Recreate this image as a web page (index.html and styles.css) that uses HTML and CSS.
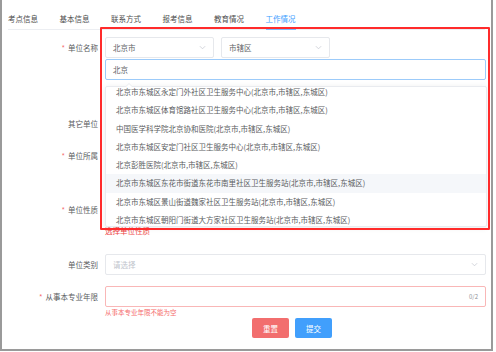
FILE: index.html
```html
<!doctype html>
<html>
<head>
    <meta charset="utf-8">
    <title>工作情况</title>
    <link rel="stylesheet" href="styles.css">
</head>
<body>
    <div class="window">
        <ul class="tabs">
            <li>考点信息</li>
            <li>基本信息</li>
            <li>联系方式</li>
            <li>报考信息</li>
            <li>教育情况</li>
            <li class="active">工作情况</li>
        </ul>

        <form class="form">
            <div class="form-item gap-lg">
                <label class="form-label required">单位名称</label>
                <div class="form-control">
                    <div class="select-row">
                        <div class="select">
                            <span>北京市</span>
                            <svg class="arrow" viewBox="0 0 8 5"><path d="M1 1l3 3 3-3" /></svg>
                        </div>
                        <div class="select">
                            <span>市辖区</span>
                            <svg class="arrow" viewBox="0 0 8 5"><path d="M1 1l3 3 3-3" /></svg>
                        </div>
                    </div>
                    <div class="input focused">北京</div>
                </div>
            </div>

            <div class="form-item gap-sm">
                <label class="form-label">其它单位</label>
                <div class="form-control"><div class="input"></div></div>
            </div>

            <div class="form-item gap-lg">
                <label class="form-label required">单位所属</label>
                <div class="form-control"><div class="input"></div></div>
            </div>

            <div class="form-item gap-md">
                <label class="form-label required">单位性质</label>
                <div class="form-control">
                    <div class="input"></div>
                    <div class="hint-error">选择单位性质</div>
                </div>
            </div>

            <div class="form-item gap-sm">
                <label class="form-label">单位类别</label>
                <div class="form-control">
                    <div class="select">
                        <span class="placeholder">请选择</span>
                        <svg class="arrow" viewBox="0 0 8 5"><path d="M1 1l3 3 3-3" /></svg>
                    </div>
                </div>
            </div>

            <div class="form-item gap-sm">
                <label class="form-label required">从事本专业年限</label>
                <div class="form-control">
                    <div class="input invalid">
                        <span></span>
                        <span class="count">0/2</span>
                    </div>
                    <div class="error">从事本专业年限不能为空</div>
                </div>
            </div>

            <div class="form-item">
                <div class="form-label"></div>
                <div class="form-control actions">
                    <button type="button" class="btn btn-danger">重置</button>
                    <button type="button" class="btn btn-primary">提交</button>
                </div>
            </div>
        </form>

        <div class="dropdown">
            <span class="dropdown-arrow"></span>
            <ul class="dropdown-list">
                <li>北京市东城区永定门外社区卫生服务中心(北京市,市辖区,东城区)</li>
                <li>北京市东城区体育馆路社区卫生服务中心(北京市,市辖区,东城区)</li>
                <li>中国医学科学院北京协和医院(北京市,市辖区,东城区)</li>
                <li>北京市东城区安定门社区卫生服务中心(北京市,市辖区,东城区)</li>
                <li>北京彭胜医院(北京市,市辖区,东城区)</li>
                <li class="hover">北京市东城区东花市街道东花市南里社区卫生服务站(北京市,市辖区,东城区)</li>
                <li>北京市东城区景山街道魏家社区卫生服务站(北京市,市辖区,东城区)</li>
                <li>北京市东城区朝阳门街道大方家社区卫生服务站(北京市,市辖区,东城区)</li>
            </ul>
        </div>

        <div class="highlight"></div>
    </div>
</body>
</html>
```

FILE: styles.css
```css
:root {
    --primary: #409eff;
    --danger: #f56c6c;
    --border: #e6e8ec;
    --text: #606266;
}

html, body {
    margin: 0;
    background: #fff;
}

.window {
    position: relative;
    width: 489px;
    height: 349px;
    border-left: 2px solid #9a9a9a;
    border-right: 2px solid #9a9a9a;
    border-bottom: 2px solid #9a9a9a;
    font-family: "Noto Sans CJK SC", "Noto Sans", sans-serif;
    font-size: 7.5px;
    color: var(--text);
    overflow: hidden;
}

/* tabs */
.tabs {
    display: flex;
    gap: 21.5px;
    margin: 0 6px;
    padding: 0;
    list-style: none;
    height: 30px;
    box-sizing: border-box;
    border-bottom: 1px solid #eceef2;
}
.tabs li {
    padding-top: 14px;
    line-height: 10px;
    height: 29px;
    box-sizing: border-box;
    color: #4c4c4c;
}
.tabs li.active {
    color: var(--primary);
    height: 30px;
    border-bottom: 1px solid #7cb9fb;
}

/* form */
.form {
    padding: 7px 5px 0 0;
}
.form-item {
    display: flex;
    position: relative;
}
.gap-sm { margin-bottom: 11px; }
.gap-md { margin-bottom: 18px; }
.gap-lg { margin-bottom: 33px; }

.form-label {
    flex: 0 0 103px;
    box-sizing: border-box;
    padding-right: 7px;
    text-align: right;
    line-height: 21px;
    color: #5a5c60;
}
.form-label.required::before {
    content: "*";
    color: var(--danger);
    margin-right: 3px;
}
.form-control {
    flex: 1;
    min-width: 0;
}

.select-row {
    display: flex;
    gap: 7px;
    margin-bottom: 1px;
}
.select-row .select {
    width: 109px;
}

.select,
.input {
    height: 21px;
    box-sizing: border-box;
    border: 1px solid var(--border);
    border-radius: 2px;
    padding: 0 7px;
    display: flex;
    align-items: center;
    justify-content: space-between;
    background: #fff;
    color: var(--text);
}
.input.focused {
    border-color: #9ccbfa;
}
.input.invalid {
    border-color: #f9b7b7;
}
.placeholder {
    color: #c0c4cc;
}
.arrow {
    width: 7px;
    height: 5px;
    fill: none;
    stroke: #c8cbd2;
    stroke-width: 0.9;
}
.count {
    font-size: 6px;
    color: #909399;
}

.hint-error {
    margin-top: 6px;
    line-height: 10px;
    color: #ee4040;
}
.error {
    position: absolute;
    top: 100%;
    line-height: 10px;
    font-size: 6.5px;
    color: var(--danger);
}

.actions {
    display: flex;
    justify-content: center;
    gap: 6px;
    padding-right: 7px;
}
.btn {
    width: 37px;
    height: 20px;
    border: none;
    border-radius: 2px;
    color: #fff;
    font-family: inherit;
    font-size: 7.5px;
    padding: 0;
}
.btn-danger { background: #f26e6e; }
.btn-primary { background: #419ffc; }

/* overlays */
.dropdown {
    position: absolute;
    left: 103px;
    top: 86px;
    width: 382px;
    height: 141px;
    box-sizing: border-box;
    border: 1px solid #e9ebef;
    border-radius: 2px;
    background: #fff;
    box-shadow: 0 1px 6px rgba(0, 0, 0, 0.08);
}
.dropdown-list {
    margin: -4px 0 0;
    padding: 0;
    list-style: none;
    height: calc(100% + 4px);
    overflow: hidden;
}
.dropdown-list li {
    line-height: 18.25px;
    padding-left: 10px;
    white-space: nowrap;
    color: #5a5c60;
}
.dropdown-list li.hover {
    background: #f5f7fa;
}
.dropdown-arrow {
    position: absolute;
    top: -4px;
    left: 19px;
    width: 0;
    height: 0;
    border-left: 4px solid transparent;
    border-right: 4px solid transparent;
    border-bottom: 4px solid #e9ebef;
}
.dropdown-arrow::after {
    content: "";
    position: absolute;
    top: 1px;
    left: -3px;
    border-left: 3px solid transparent;
    border-right: 3px solid transparent;
    border-bottom: 3px solid #fff;
}

.highlight {
    position: absolute;
    left: 98px;
    top: 27px;
    width: 390px;
    height: 203px;
    box-sizing: border-box;
    border: 2px solid #ff2b2b;
    border-radius: 1px;
}
```
